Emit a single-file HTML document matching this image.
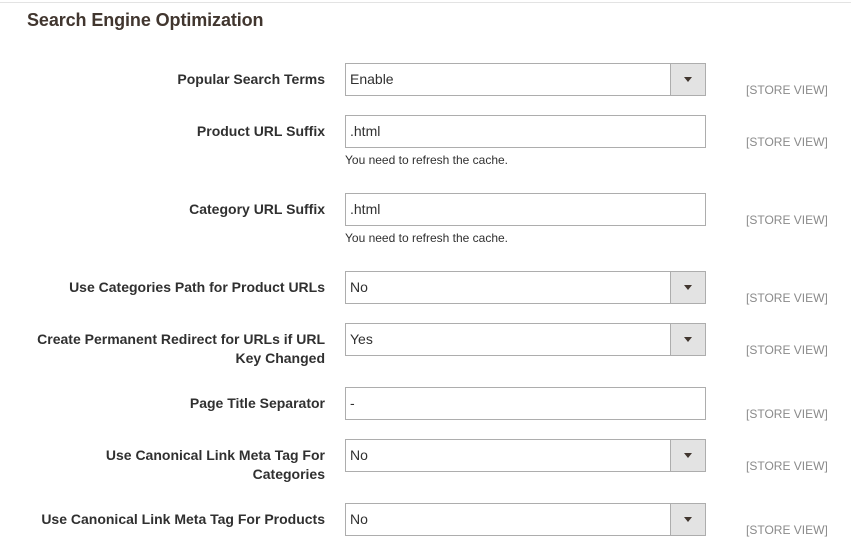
<!DOCTYPE html>
<html><head><style>
body{margin:0;width:851px;height:545px;background:#fff;font-family:"Liberation Sans",sans-serif;color:#303030;position:relative;overflow:hidden}
.top{position:absolute;left:0;top:2px;width:851px;height:1px;background:#e3e3e3}
h1{position:absolute;left:27px;top:10px;margin:0;font-size:18px;font-weight:bold;color:#41362f;letter-spacing:-0.1px}
.lbl{position:absolute;right:526px;width:320px;text-align:right;font-weight:bold;font-size:14px;line-height:19px;color:#303030}
.in{position:absolute;left:345px;height:31px;border:1px solid #adadad;font-size:14px;line-height:31px;padding-left:4px;box-sizing:content-box;width:355px}
.btn{position:absolute;right:0;top:0;width:34px;height:31px;background:#e3e3e3;border-left:1px solid #adadad}
.btn:after{content:"";position:absolute;left:13px;top:13px;border-left:4px solid transparent;border-right:4px solid transparent;border-top:5px solid #41362f}
.sv{position:absolute;left:746px;font-size:12px;color:#8a8a8a}
.note{position:absolute;left:345px;font-size:12px;color:#303030}
</style></head><body>
<div class="top"></div>
<h1>Search Engine Optimization</h1>

<div class="lbl" style="top:70px">Popular Search Terms</div>
<div class="in" style="top:63px">Enable<div class="btn"></div></div>
<div class="sv" style="top:83px">[STORE VIEW]</div>

<div class="lbl" style="top:122px">Product URL Suffix</div>
<div class="in" style="top:115px">.html</div>
<div class="note" style="top:153px">You need to refresh the cache.</div>
<div class="sv" style="top:135px">[STORE VIEW]</div>

<div class="lbl" style="top:200px">Category URL Suffix</div>
<div class="in" style="top:193px">.html</div>
<div class="note" style="top:231px">You need to refresh the cache.</div>
<div class="sv" style="top:213px">[STORE VIEW]</div>

<div class="lbl" style="top:278px">Use Categories Path for Product URLs</div>
<div class="in" style="top:271px">No<div class="btn"></div></div>
<div class="sv" style="top:291px">[STORE VIEW]</div>

<div class="lbl" style="top:330px;width:300px">Create Permanent Redirect for URLs if URL Key Changed</div>
<div class="in" style="top:323px">Yes<div class="btn"></div></div>
<div class="sv" style="top:343px">[STORE VIEW]</div>

<div class="lbl" style="top:394px">Page Title Separator</div>
<div class="in" style="top:387px">-</div>
<div class="sv" style="top:407px">[STORE VIEW]</div>

<div class="lbl" style="top:446px;width:230px">Use Canonical Link Meta Tag For Categories</div>
<div class="in" style="top:439px">No<div class="btn"></div></div>
<div class="sv" style="top:459px">[STORE VIEW]</div>

<div class="lbl" style="top:510px">Use Canonical Link Meta Tag For Products</div>
<div class="in" style="top:503px">No<div class="btn"></div></div>
<div class="sv" style="top:523px">[STORE VIEW]</div>
</body></html>
